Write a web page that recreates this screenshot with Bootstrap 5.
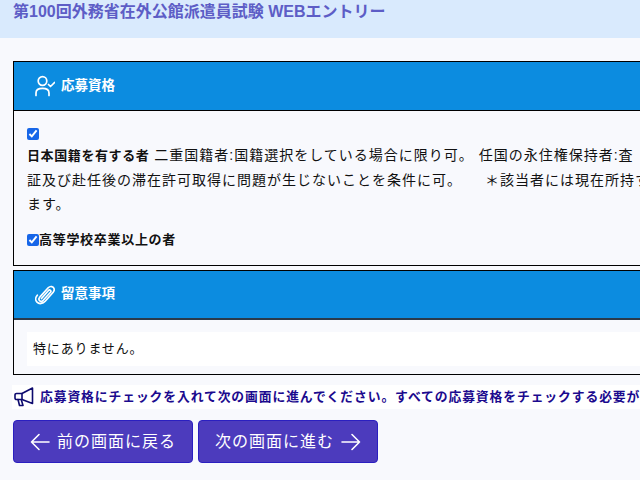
<!DOCTYPE html>
<html lang="ja">
<head>
<meta charset="utf-8">
<title>WEBエントリー</title>
<link href="https://cdn.jsdelivr.net/npm/bootstrap@5.3.0/dist/css/bootstrap.min.css" rel="stylesheet">
<style>
html,body{height:480px;overflow:hidden}
body{background:#f8f9fd;font-family:"Liberation Sans","Noto Sans CJK JP",sans-serif;color:#111;width:640px}
.top-band{height:38px;background:#d9eafd;padding:0 13px;overflow:hidden}
.top-title{font-size:16px;line-height:22px;padding-top:1px;font-weight:700;color:#5d5dc6;margin:0;white-space:nowrap}
.page-wrap{width:900px;padding:23px 0 0 13px}
.sec-box{border:1px solid #000;border-radius:0;background:#f8f9fd;margin-bottom:4px}
.sec-head{background:#0c8ce0;color:#fff;height:49px;border-bottom:1px solid #000;border-radius:0;padding:0 0 0 21px;font-size:13.5px;font-weight:700;gap:6px}
.sec-head.dim{height:49px;border-bottom:2px solid #2b3a4a}
.sec-body{padding:13px 13px 0}
.tick{width:12px;height:12px;margin:0;accent-color:#1766e8;vertical-align:-1px}
.tick-row{height:19px;line-height:19px}
.qual-text{height:72px;line-height:24px;font-size:14px;letter-spacing:1px;white-space:nowrap}
.qual-text b{font-size:13px;letter-spacing:.6px}
.qual-two{font-size:13px;letter-spacing:.7px;font-weight:700;line-height:20px;margin-top:15px;height:35px}
.note-wrap{padding:12px 13px 0;height:54px}
.note-box{background:#fff;width:640px;height:34px;line-height:34px;padding-left:6px;font-size:13px;letter-spacing:.85px}
.notice{background:#fff;height:24px;margin-top:10px;margin-left:-1px;color:#1b0a8e;font-size:12.8px;font-weight:700;white-space:nowrap;gap:6px;padding-left:2px;width:880px;letter-spacing:.9px}
.act-row{gap:5px;margin-top:11px}
.act-btn{width:180px;height:43px;background:#4c3bbd;border:1px solid #2b1fc0;color:#fff;border-radius:4px;font-size:16px;letter-spacing:1px;padding:0;display:flex;align-items:center;justify-content:center;gap:7px;line-height:1}
.act-btn:hover{background:#4c3bbd;color:#fff}
</style>
</head>
<body>
<div class="top-band"><h1 class="top-title">第100回外務省在外公館派遣員試験 WEBエントリー</h1></div>
<div class="page-wrap">
  <div class="sec-box">
    <div class="sec-head d-flex align-items-center">
      <svg width="20" height="22" viewBox="0 0 20 22" fill="none" stroke="#fff" stroke-width="1.700" stroke-linecap="round" stroke-linejoin="round"><circle cx="7.500" cy="6" r="4.300"/><path d="M1 20.500v-2.500c0-3 2.200-4.600 6.500-4.600s6.500 1.600 6.500 4.600v2.500"/><path d="M13.500 9.500l2 2 4-4"/></svg>
      <span>応募資格</span>
    </div>
    <div class="sec-body">
      <div class="tick-row"><input class="tick" type="checkbox" checked></div>
      <div class="qual-text"><b>日本国籍を有する者</b> 二重国籍者:国籍選択をしている場合に限り可。 任国の永住権保持者:査<br>証及び赴任後の滞在許可取得に問題が生じないことを条件に可。　　＊該当者には現在所持す<br>ます。</div>
      <div class="qual-two d-flex align-items-start"><input class="tick mt-1" type="checkbox" checked><span>高等学校卒業以上の者</span></div>
    </div>
  </div>
  <div class="sec-box">
    <div class="sec-head dim d-flex align-items-center">
      <svg width="20" height="22" viewBox="0 0 20 22" fill="none" stroke="#fff" stroke-width="1.700" stroke-linecap="round" stroke-linejoin="round"><path d="M6.500 14.500 13.500 6.500c1.200-1.300 3.200.3 2 1.800L8 16.500c-1.800 2-5 .2-3.800-2.500.2-.5.6-1 1-1.400l8-8.800c2-2.200 5.500-1.500 6 1.200.2 1.200-.2 2.300-1 3.200l-8 9c-2.300 2.500-6 3.200-8.200 1-2-2-1.500-5 .3-7"/></svg>
      <span>留意事項</span>
    </div>
    <div class="note-wrap"><div class="note-box">特にありません。</div></div>
  </div>
  <div class="notice d-flex align-items-center">
    <svg class="flex-shrink-0" width="20" height="20" viewBox="0 0 20 20" fill="none" stroke="#0d0a6e" stroke-width="1.600" stroke-linejoin="round" stroke-linecap="round"><path d="M18.500 1v15.500L8 12.500H2.500A1.500 1.500 0 0 1 1 11V8A1.500 1.500 0 0 1 2.500 6.500H8z"/><path d="M8 6.500v6M4 12.500 5.500 18.500H9L7.500 13.500"/></svg>
    <span>応募資格にチェックを入れて次の画面に進んでください。すべての応募資格をチェックする必要があります。</span>
  </div>
  <div class="act-row d-flex">
    <button class="btn act-btn" type="button"><svg width="20" height="18" viewBox="0 0 20 18" fill="none" stroke="#fff" stroke-width="1.600" stroke-linecap="round" stroke-linejoin="round"><path d="M19 9H1.500M9 1.500 1.500 9 9 16.500"/></svg><span>前の画面に戻る</span></button>
    <button class="btn act-btn" type="button"><span>次の画面に進む</span><svg width="20" height="18" viewBox="0 0 20 18" fill="none" stroke="#fff" stroke-width="1.600" stroke-linecap="round" stroke-linejoin="round"><path d="M1 9h17.500M11 1.500 18.500 9 11 16.500"/></svg></button>
  </div>
</div>
<script src="https://cdn.jsdelivr.net/npm/bootstrap@5.3.0/dist/js/bootstrap.bundle.min.js"></script>
</body>
</html>
